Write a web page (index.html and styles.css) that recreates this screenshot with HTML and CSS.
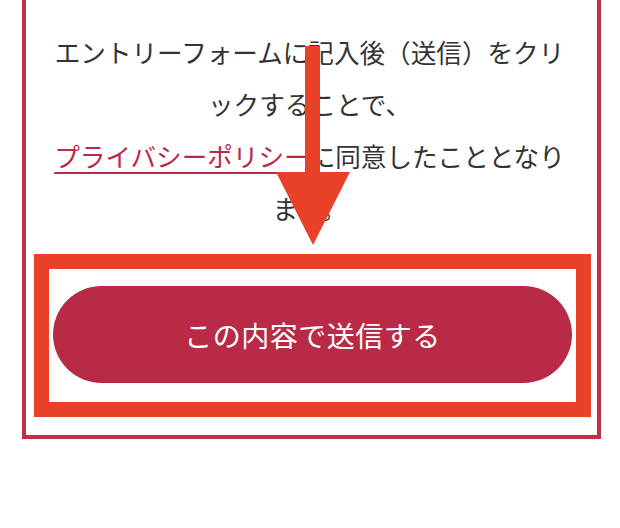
FILE: index.html
```html
<!DOCTYPE html>
<html lang="ja">
<head>
<meta charset="utf-8">
<link rel="stylesheet" href="styles.css">
</head>
<body>
<div class="page">
  <div class="box">
    <p class="note">エントリーフォームに記入後（送信）をクリ<br>ックすることで、<br><a class="link" href="#">プライバシーポリシー</a>に同意したこととなり<br>ます。</p>
    <div class="highlight">
      <button class="submit" type="button">この内容で送信する</button>
    </div>
  </div>
  <svg class="arrow" width="74" height="200" viewBox="0 0 74 200" aria-hidden="true">
    <rect x="29" y="0" width="15" height="127" fill="#e84127"/>
    <polygon points="0,126 74,126 37,199" fill="#e84127"/>
  </svg>
</div>
</body>
</html>
```

FILE: styles.css
```css
html, body {
  margin: 0;
  padding: 0;
  background: #ffffff;
}

.page {
  position: relative;
  width: 620px;
  height: 528px;
  overflow: hidden;
  font-family: "Noto Sans CJK JP", "Noto Sans", sans-serif;
}

.box {
  box-sizing: border-box;
  margin-left: 22px;
  width: 579px;
  border: 4px solid #c0304b;
  border-top: none;
  padding: 26px 6px 18px 8px;
}

.note {
  margin: 0 0 20px 0;
  padding: 0 17px 0 11px;
  text-align: center;
  font-size: 25.6px;
  line-height: 52px;
  color: #333333;
}

.link {
  color: #b8294a;
  text-decoration: underline;
  text-decoration-thickness: 2px;
  text-underline-offset: 5px;
}

.highlight {
  box-sizing: border-box;
  border: 15px solid #e84127;
  padding: 17px 4px 19px 4px;
}

.submit {
  display: flex;
  align-items: center;
  justify-content: center;
  width: 100%;
  height: 97px;
  border: none;
  border-radius: 49px;
  background: #b82a45;
  color: #ffffff;
  font-family: "Noto Sans CJK JP", "Noto Sans", sans-serif;
  font-size: 28px;
  letter-spacing: 0.5px;
  padding: 0;
}

.arrow {
  position: absolute;
  left: 276px;
  top: 46px;
}
```
